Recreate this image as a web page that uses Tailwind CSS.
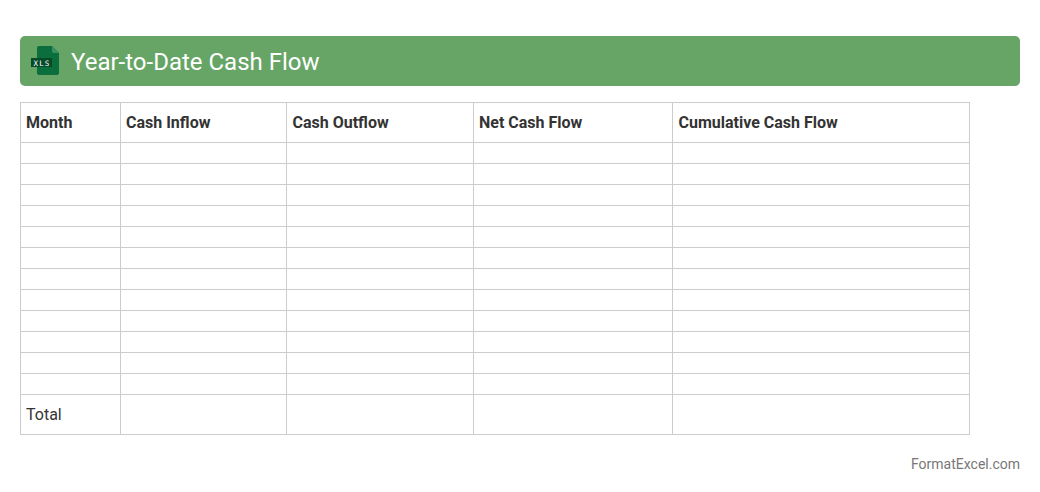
<!DOCTYPE html>
<html lang="en">
  <head>
    <meta charset="UTF-8" />
    <title>Year-to-Date Cash Flow</title>
    <script src="https://cdn.jsdelivr.net/npm/@tailwindcss/browser@4"></script>
  </head>
  <body class="bg-white font-['Roboto',sans-serif] text-[#333]">
    <div class="px-5 pt-9">
      <!-- Title bar -->
      <div class="flex h-[50px] items-center rounded-[5px] bg-[#66a566] pl-[11px]">
        <svg class="h-[32px] w-[32px]" viewBox="0 0 32 32">
          <path d="M6 3a2 2 0 0 1 2-2h13l7 7v20a2 2 0 0 1-2 2H8a2 2 0 0 1-2-2z" fill="#0b6e3d" />
          <path d="M21 1l7 7h-5a2 2 0 0 1-2-2z" fill="#3a9066" />
          <rect x="0" y="13" width="21" height="9" fill="#064a29" />
          <text x="11" y="20.500" text-anchor="middle" font-family="DejaVu Sans Mono" font-size="7.500" letter-spacing="1.200" fill="#fff">XLS</text>
        </svg>
        <h1 class="ml-[8px] pt-[2px] text-[24px] leading-none font-normal text-white">Year-to-Date Cash Flow</h1>
      </div>

      <!-- Table -->
      <table class="mt-4 w-[949px] table-fixed border-collapse text-[16px] leading-none">
        <colgroup>
          <col class="w-[100px]" />
          <col class="w-[166px]" />
          <col class="w-[187px]" />
          <col class="w-[199px]" />
          <col class="w-[297px]" />
        </colgroup>
        <thead>
          <tr class="h-[40px] text-left font-bold">
            <th class="border border-[#ccc] px-[5px]">Month</th>
            <th class="border border-[#ccc] px-[5px]">Cash Inflow</th>
            <th class="border border-[#ccc] px-[5.500px]">Cash Outflow</th>
            <th class="border border-[#ccc] px-[5px]">Net Cash Flow</th>
            <th class="border border-[#ccc] px-[5.500px]">Cumulative Cash Flow</th>
          </tr>
        </thead>
        <tbody>
          <tr class="h-[21px]"><td class="border border-[#ccc]"></td><td class="border border-[#ccc]"></td><td class="border border-[#ccc]"></td><td class="border border-[#ccc]"></td><td class="border border-[#ccc]"></td></tr>
          <tr class="h-[21px]"><td class="border border-[#ccc]"></td><td class="border border-[#ccc]"></td><td class="border border-[#ccc]"></td><td class="border border-[#ccc]"></td><td class="border border-[#ccc]"></td></tr>
          <tr class="h-[21px]"><td class="border border-[#ccc]"></td><td class="border border-[#ccc]"></td><td class="border border-[#ccc]"></td><td class="border border-[#ccc]"></td><td class="border border-[#ccc]"></td></tr>
          <tr class="h-[21px]"><td class="border border-[#ccc]"></td><td class="border border-[#ccc]"></td><td class="border border-[#ccc]"></td><td class="border border-[#ccc]"></td><td class="border border-[#ccc]"></td></tr>
          <tr class="h-[21px]"><td class="border border-[#ccc]"></td><td class="border border-[#ccc]"></td><td class="border border-[#ccc]"></td><td class="border border-[#ccc]"></td><td class="border border-[#ccc]"></td></tr>
          <tr class="h-[21px]"><td class="border border-[#ccc]"></td><td class="border border-[#ccc]"></td><td class="border border-[#ccc]"></td><td class="border border-[#ccc]"></td><td class="border border-[#ccc]"></td></tr>
          <tr class="h-[21px]"><td class="border border-[#ccc]"></td><td class="border border-[#ccc]"></td><td class="border border-[#ccc]"></td><td class="border border-[#ccc]"></td><td class="border border-[#ccc]"></td></tr>
          <tr class="h-[21px]"><td class="border border-[#ccc]"></td><td class="border border-[#ccc]"></td><td class="border border-[#ccc]"></td><td class="border border-[#ccc]"></td><td class="border border-[#ccc]"></td></tr>
          <tr class="h-[21px]"><td class="border border-[#ccc]"></td><td class="border border-[#ccc]"></td><td class="border border-[#ccc]"></td><td class="border border-[#ccc]"></td><td class="border border-[#ccc]"></td></tr>
          <tr class="h-[21px]"><td class="border border-[#ccc]"></td><td class="border border-[#ccc]"></td><td class="border border-[#ccc]"></td><td class="border border-[#ccc]"></td><td class="border border-[#ccc]"></td></tr>
          <tr class="h-[21px]"><td class="border border-[#ccc]"></td><td class="border border-[#ccc]"></td><td class="border border-[#ccc]"></td><td class="border border-[#ccc]"></td><td class="border border-[#ccc]"></td></tr>
          <tr class="h-[21px]"><td class="border border-[#ccc]"></td><td class="border border-[#ccc]"></td><td class="border border-[#ccc]"></td><td class="border border-[#ccc]"></td><td class="border border-[#ccc]"></td></tr>
          <tr class="h-[40px]"><td class="border border-[#ccc] px-[5px]">Total</td><td class="border border-[#ccc]"></td><td class="border border-[#ccc]"></td><td class="border border-[#ccc]"></td><td class="border border-[#ccc]"></td></tr>
        </tbody>
      </table>

      <div class="mt-[21px] text-right text-[14px] leading-[16px] text-[#777]">FormatExcel.com</div>
    </div>
  </body>
</html>
